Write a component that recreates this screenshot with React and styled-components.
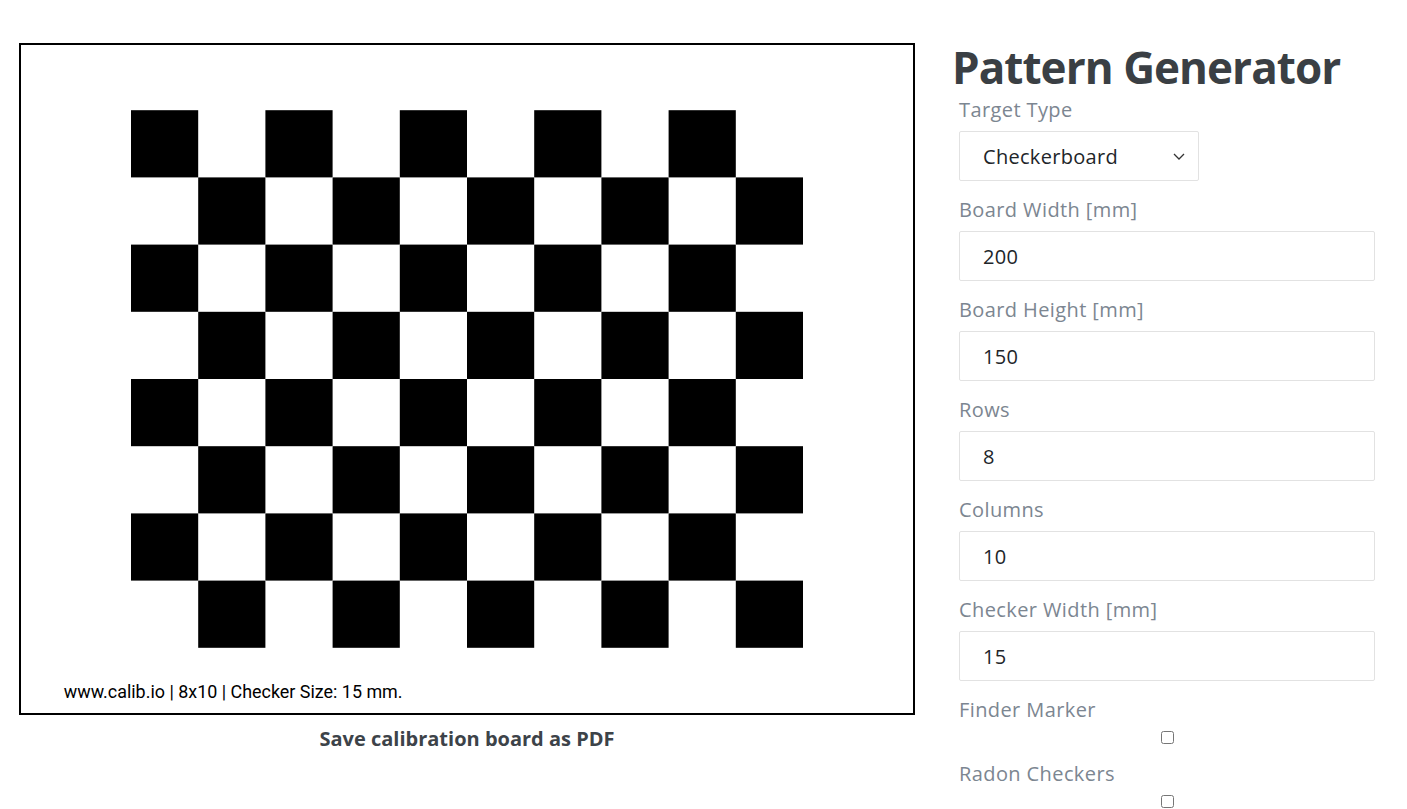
import React from "react";
import styled, { createGlobalStyle } from "styled-components";

const GlobalStyle = createGlobalStyle`
  body {
    margin: 0;
    background: #fff;
    font-family: "Open Sans", "Liberation Sans", sans-serif;
  }
`;

const Page = styled.div`
  display: flex;
  align-items: flex-start;
  padding: 43px 0 0 19px;
  gap: 38px;
`;

const PreviewColumn = styled.div`
  display: flex;
  flex-direction: column;
  align-items: center;
  width: 896px;
`;

const Board = styled.div`
  width: 896px;
  height: 672px;
  display: flex;
  outline: 2px solid #000;
  outline-offset: -2px;
`;

const SaveLink = styled.a`
  margin-top: 10px;
  font-family: "Open Sans", "Liberation Sans", sans-serif;
  font-weight: 700;
  font-size: 20px;
  color: #3d4349;
  text-decoration: none;
  cursor: pointer;
`;

const Panel = styled.div`
  display: flex;
  flex-direction: column;
  width: 440px;
`;

const Title = styled.h1`
  margin: -2px 0 2px -1px;
  font-family: "Open Sans", "Liberation Sans", sans-serif;
  font-size: 44px;
  line-height: 53px;
  font-weight: 700;
  letter-spacing: -0.95px;
  color: #3a3f44;
`;

const Group = styled.div`
  display: flex;
  flex-direction: column;
  padding-left: 6px;
  width: 416px;
  margin-bottom: ${(p) => (p.$check ? "16px" : "15px")};
`;

const Label = styled.label`
  padding-top: 1px;
  font-size: 20px;
  letter-spacing: 0.4px;
  line-height: 26px;
  color: #7c8691;
  margin-bottom: ${(p) => (p.$check ? "7px" : "8px")};
`;

const Field = styled.input`
  box-sizing: border-box;
  height: 50px;
  width: 100%;
  border: 1px solid #e2e2e2;
  border-radius: 2px;
  padding: 0 23px;
  font-family: inherit;
  font-size: 20px;
  letter-spacing: 0.3px;
  color: #212529;
  outline: none;
`;

const SelectWrap = styled.div`
  position: relative;
  width: 240px;
`;

const Select = styled.select`
  appearance: none;
  box-sizing: border-box;
  width: 100%;
  height: 50px;
  border: 1px solid #e2e2e2;
  border-radius: 2px;
  background: #fff;
  padding: 0 23px;
  font-family: inherit;
  font-size: 20px;
  letter-spacing: 0.3px;
  color: #212529;
  outline: none;
`;

const Chevron = styled.svg`
  position: absolute;
  right: 14px;
  top: 20px;
  pointer-events: none;
`;

const Check = styled.input`
  align-self: center;
  margin: 1px 0 0;
  width: 13px;
  height: 13px;
`;

const ROWS = 8;
const COLS = 10;
const SIZE = 15;

const Checkerboard = () => {
  const x0 = (200 - COLS * SIZE) / 2;
  const y0 = (150 - ROWS * SIZE) / 2;
  const squares = [];
  for (let r = 0; r < ROWS; r++) {
    for (let c = 0; c < COLS; c++) {
      if ((r + c) % 2 === 0) {
        squares.push(
          <rect key={`${r}-${c}`} x={x0 + c * SIZE} y={y0 + r * SIZE} width={SIZE} height={SIZE} fill="#000" />
        );
      }
    }
  }
  return (
    <svg width="896" height="672" viewBox="0 0 200 150">
      {squares}
      <text x="10" y="146.3" fontFamily="Roboto, sans-serif" fontSize="4" fill="#000">
        www.calib.io | 8x10 | Checker Size: 15 mm.
      </text>
    </svg>
  );
};

const fields = [
  ["Board Width [mm]", "200"],
  ["Board Height [mm]", "150"],
  ["Rows", "8"],
  ["Columns", "10"],
  ["Checker Width [mm]", "15"],
];

export default function App() {
  return (
    <>
      <GlobalStyle />
      <Page>
        <PreviewColumn>
          <Board>
            <Checkerboard />
          </Board>
          <SaveLink>Save calibration board as PDF</SaveLink>
        </PreviewColumn>
        <Panel>
          <Title>Pattern Generator</Title>
          <Group>
            <Label>Target Type</Label>
            <SelectWrap>
              <Select defaultValue="checkerboard">
                <option value="checkerboard">Checkerboard</option>
                <option value="charuco">ChArUco</option>
                <option value="circles">Circle Grid</option>
              </Select>
              <Chevron width="12" height="10" viewBox="0 0 12 10">
                <path d="M1 3 L6 8 L11 3" fill="none" stroke="#333" strokeWidth="1.3" />
              </Chevron>
            </SelectWrap>
          </Group>
          {fields.map(([label, value]) => (
            <Group key={label}>
              <Label>{label}</Label>
              <Field defaultValue={value} />
            </Group>
          ))}
          <Group $check>
            <Label $check>Finder Marker</Label>
            <Check type="checkbox" />
          </Group>
          <Group $check>
            <Label $check>Radon Checkers</Label>
            <Check type="checkbox" />
          </Group>
        </Panel>
      </Page>
    </>
  );
}
